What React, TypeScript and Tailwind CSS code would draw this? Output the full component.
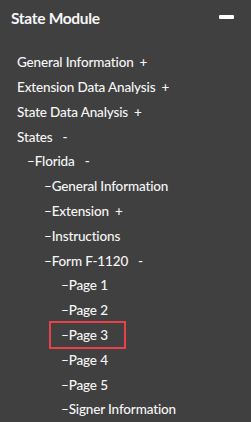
import React from "react";

type Item = { label: string; level: number; sign?: string; boxed?: boolean };

const items: Item[] = [
  { label: "General Information", level: 0, sign: "+" },
  { label: "Extension Data Analysis", level: 0, sign: "+" },
  { label: "State Data Analysis", level: 0, sign: "+" },
  { label: "States", level: 0, sign: "-" },
  { label: "Florida", level: 1, sign: "-" },
  { label: "General Information", level: 2 },
  { label: "Extension", level: 2, sign: "+" },
  { label: "Instructions", level: 2 },
  { label: "Form F-1120", level: 2, sign: "-" },
  { label: "Page 1", level: 3 },
  { label: "Page 2", level: 3 },
  { label: "Page 3", level: 3, boxed: true },
  { label: "Page 4", level: 3 },
  { label: "Page 5", level: 3 },
  { label: "Signer Information", level: 3 },
];

const padByLevel = ["pl-[17px]", "pl-[27px]", "pl-[44px]", "pl-[61px]"];

export default function App() {
  return (
    <div
      className="w-[251px] h-[422px] bg-[#404040] text-[#f6f6f6] overflow-hidden"
      style={{ fontFamily: "Lato, 'Noto Sans', sans-serif" }}
    >
      <div className="flex items-center justify-between h-[38px] pl-[11px] pr-[17px]">
        <span className="text-[15.5px] font-bold tracking-[-0.3px]">State Module</span>
        <span className="block w-[15px] h-[4px] mb-[5px] bg-white rounded-[1px]" />
      </div>
      <ul className="pt-[12.6px]">
        {items.map((it, i) => (
          <li key={i} className={`relative h-[24.8px] flex items-center ${padByLevel[it.level]}`}>
            {it.boxed && (
              <span className="absolute left-[49px] w-[77px] top-[-2px] h-[28px] border-2 border-[#e8414a]" />
            )}
            <span className="flex items-center text-[13.5px] font-medium leading-none whitespace-nowrap tracking-[-0.15px]">
              {it.level > 0 ? "–" : ""}
              {it.label}
              {it.sign && (
                <span className={it.sign === "-" ? "ml-[10px]" : "ml-[6px]"}>{it.sign}</span>
              )}
            </span>
          </li>
        ))}
      </ul>
    </div>
  );
}
